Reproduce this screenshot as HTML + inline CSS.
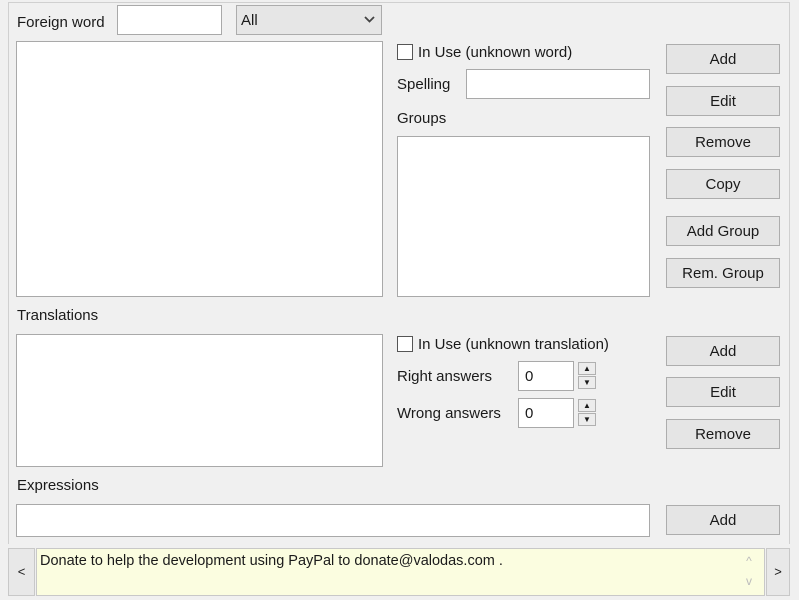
<!DOCTYPE html>
<html><head><meta charset="utf-8"><style>
body{margin:0;width:799px;height:600px;background:#f0f0f0;position:relative;overflow:hidden;font-family:"Liberation Sans",sans-serif;font-size:15px;color:#1a1a1a}
div{position:absolute;box-sizing:border-box}
.t{white-space:nowrap;line-height:18px;margin-top:2px}
.box{background:#fff;border:1px solid #a9a9a9}
.btn{background:#e5e5e5;border:1px solid #adadad;text-align:center;line-height:28px;padding-top:1px;left:666px;width:114px;height:30px}
.cb{width:16px;height:16px;background:#fff;border:1px solid #555}
.ar{width:18px;height:13px;border:1px solid #b0b0b0;background:#ececec;font-size:8px;text-align:center;line-height:11px}
</style></head><body>
<div style="left:8px;top:2px;width:782px;height:542px;border:1px solid #d0d0d0;border-bottom:none"></div>
<div class="t" style="left:17px;top:12px">Foreign word</div>
<div class="box" style="left:117px;top:5px;width:105px;height:30px"></div>
<div style="left:236px;top:5px;width:146px;height:30px;background:#e6e6e6;border:1px solid #acacac"></div>
<div class="t" style="left:241px;top:10px">All</div>
<svg style="position:absolute;left:364px;top:16px" width="11" height="7"><path d="M1 1L5.5 5.5L10 1" stroke="#444" stroke-width="1.8" fill="none"/></svg>
<div class="box" style="left:16px;top:41px;width:367px;height:256px"></div>
<div class="cb" style="left:397px;top:44px"></div>
<div class="t" style="left:418px;top:42px">In Use (unknown word)</div>
<div class="t" style="left:397px;top:74px">Spelling</div>
<div class="box" style="left:466px;top:69px;width:184px;height:30px"></div>
<div class="t" style="left:397px;top:108px">Groups</div>
<div class="box" style="left:397px;top:136px;width:253px;height:161px"></div>
<div class="btn" style="top:44px">Add</div>
<div class="btn" style="top:86px">Edit</div>
<div class="btn" style="top:127px">Remove</div>
<div class="btn" style="top:169px">Copy</div>
<div class="btn" style="top:216px">Add Group</div>
<div class="btn" style="top:258px">Rem. Group</div>
<div class="t" style="left:17px;top:305px">Translations</div>
<div class="box" style="left:16px;top:334px;width:367px;height:133px"></div>
<div class="cb" style="left:397px;top:336px"></div>
<div class="t" style="left:418px;top:334px">In Use (unknown translation)</div>
<div class="t" style="left:397px;top:366px">Right answers</div>
<div class="box" style="left:518px;top:361px;width:56px;height:30px"></div>
<div class="t" style="left:525px;top:366px">0</div>
<div class="ar" style="left:578px;top:362px">▲</div><div class="ar" style="left:578px;top:376px">▼</div>
<div class="t" style="left:397px;top:403px">Wrong answers</div>
<div class="box" style="left:518px;top:398px;width:56px;height:30px"></div>
<div class="t" style="left:525px;top:403px">0</div>
<div class="ar" style="left:578px;top:399px">▲</div><div class="ar" style="left:578px;top:413px">▼</div>
<div class="btn" style="top:336px">Add</div>
<div class="btn" style="top:377px">Edit</div>
<div class="btn" style="top:419px">Remove</div>
<div class="t" style="left:17px;top:475px">Expressions</div>
<div class="box" style="left:16px;top:504px;width:634px;height:33px"></div>
<div class="btn" style="top:505px">Add</div>
<div style="left:8px;top:548px;width:27px;height:48px;background:#e8e8e8;border:1px solid #c8c8c8;text-align:center;line-height:46px;font-size:13px">&lt;</div>
<div style="left:36px;top:548px;width:729px;height:48px;background:#fbfde0;border:1px solid #c8c8c8"></div>
<div class="t" style="left:40px;top:550px;font-size:14.5px">Donate to help the development using PayPal to donate@valodas.com .</div>
<div style="left:741px;top:551px;width:16px;height:44px;color:#bbb;font-size:12px;text-align:center;line-height:20px">^<br>v</div>
<div style="left:766px;top:548px;width:24px;height:48px;background:#e8e8e8;border:1px solid #c8c8c8;text-align:center;line-height:46px;font-size:13px">&gt;</div>
</body></html>
